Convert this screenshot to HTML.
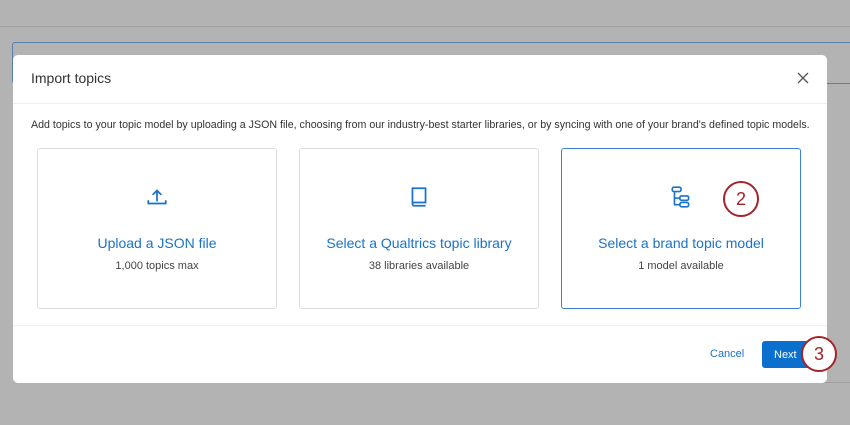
<!DOCTYPE html>
<html><head><style>
body{margin:0;width:850px;height:425px;background:#b3b3b3;font-family:"Liberation Sans",sans-serif;position:relative;overflow:hidden}
.a{position:absolute}
.card{position:absolute;top:148px;width:238px;height:159px;border:1px solid #dcdcdc;border-radius:3px;background:#fff;text-align:center}
.t{position:absolute;top:86px;width:100%;font-size:14px;color:#1a73c8}
.s{position:absolute;top:111px;width:100%;font-size:11px;color:#444}
.ic{position:absolute;top:36px;left:50%;margin-left:-12px}
.circ{position:absolute;width:32px;height:32px;border:2.5px solid #a3252b;border-radius:50%;color:#a3252b;font-size:18px;text-align:center;line-height:32px;background:#fff}
</style></head><body>
<div class="a" style="top:26px;left:0;width:850px;height:1px;background:#9e9e9e"></div>
<div class="a" style="top:42px;left:12px;width:850px;height:40px;border:1px solid #5a7fa8;border-radius:3px"></div>
<div class="a" style="top:382px;left:30px;width:820px;height:1px;background:#9e9e9e"></div>
<div class="a" style="top:55px;left:13px;width:814px;height:328px;background:#fff;border-radius:5px"></div>
<div class="a" style="top:70px;left:31px;font-size:14px;color:#333">Import topics</div>
<svg class="a" style="top:72px;left:797px" width="12" height="12" viewBox="0 0 12 12"><path d="M1 1L11 11M11 1L1 11" stroke="#555" stroke-width="1.3"/></svg>
<div class="a" style="top:103px;left:13px;width:814px;height:1px;background:#eee"></div>
<div class="a" style="top:119px;left:31px;font-size:10.65px;color:#333;white-space:nowrap">Add topics to your topic model by uploading a JSON file, choosing from our industry-best starter libraries, or by syncing with one of your brand's defined topic models.</div>
<div class="card" style="left:37px"><svg class="ic" width="24" height="24" viewBox="0 0 22 22"><path d="M11 15V5M7 9l4-4 4 4M3 14v3h16v-3" fill="none" stroke="#1a73c8" stroke-width="1.6"/></svg><div class="t">Upload a JSON file</div><div class="s">1,000 topics max</div></div>
<div class="card" style="left:299px"><svg class="ic" width="24" height="24" viewBox="0 0 22 22"><path d="M5 17V3h12v13H6.5a1.5 1.5 0 0 0 0 3H17" fill="none" stroke="#1a73c8" stroke-width="1.6"/></svg><div class="t">Select a Qualtrics topic library</div><div class="s">38 libraries available</div></div>
<div class="card" style="left:561px;border-color:#3b82d0"><svg class="ic" width="24" height="24" viewBox="0 0 22 22"><g fill="none" stroke="#1a73c8" stroke-width="1.5"><rect x="3" y="2" width="8" height="4" rx="1.5"/><rect x="10" y="10" width="8" height="4" rx="1.5"/><rect x="10" y="16" width="8" height="4" rx="1.5"/><path d="M5 6v12h5M5 12h5"/></g></svg><div class="t">Select a brand topic model</div><div class="s">1 model available</div></div>
<div class="a" style="top:325px;left:13px;width:814px;height:1px;background:#f0f0f0"></div>
<div class="a" style="top:348px;left:710px;font-size:11px;color:#1a73c8">Cancel</div>
<div class="a" style="top:341px;left:762px;width:50px;height:27px;background:#0b6fce;border-radius:3px;color:#fff;font-size:11px;line-height:28px;padding-left:12px;box-sizing:border-box">Next</div>
<div class="circ" style="left:723px;top:181px">2</div>
<div class="circ" style="left:801px;top:336px">3</div>
</body></html>
